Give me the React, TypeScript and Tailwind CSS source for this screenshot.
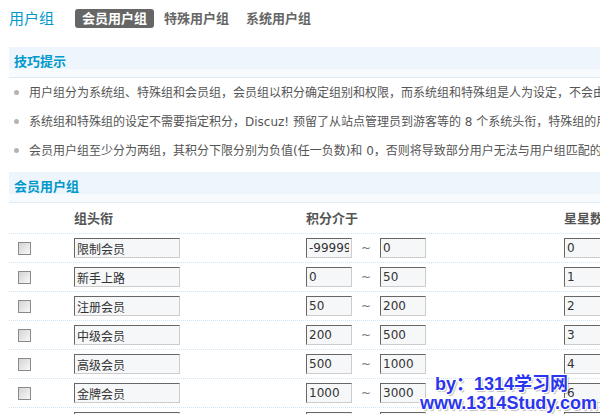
import type { ReactNode } from "react";

const tips: ReactNode[] = [
  "用户组分为系统组、特殊组和会员组，会员组以积分确定组别和权限，而系统组和特殊组是人为设定，不会由系统自动改变。",
  "系统组和特殊组的设定不需要指定积分，Discuz! 预留了从站点管理员到游客等的 8 个系统头衔，特殊组的用户需要在编辑会员时将其加入此组中。",
  "会员用户组至少分为两组，其积分下限分别为负值(任一负数)和 0，否则将导致部分用户无法与用户组匹配的情况。",
];

const groups = [
  { name: "限制会员", low: "-9999999", high: "0", stars: "0" },
  { name: "新手上路", low: "0", high: "50", stars: "1" },
  { name: "注册会员", low: "50", high: "200", stars: "2" },
  { name: "中级会员", low: "200", high: "500", stars: "3" },
  { name: "高级会员", low: "500", high: "1000", stars: "4" },
  { name: "金牌会员", low: "1000", high: "3000", stars: "6" },
  { name: "论坛元老", low: "3000", high: "9999999", stars: "8" },
];

function Field({ value, width }: { value: string; width: string }) {
  return (
    <input
      readOnly
      value={value}
      className={`${width} h-[20px] px-[2px] border border-t-[#666] border-l-[#666] border-b-[#ccc] border-r-[#ccc] bg-[#f6f7f9] text-[12px] text-[#333] outline-none font-['DejaVu_Sans','Noto_Sans_CJK_SC',sans-serif]`}
    />
  );
}

function Checkbox() {
  return (
    <span className="block w-[13px] h-[13px] border border-[#8a8a8a] bg-linear-to-br from-[#d4d4d4] to-[#f8f8f8]" />
  );
}

function Partition({ title }: { title: string }) {
  return (
    <div className="h-[31px] flex items-center pl-[5px] border-b border-dotted border-[#cfe3f3] bg-linear-to-b from-[#eef5fc] from-75% to-[#f7fbfe] to-75% text-[13px] font-bold text-[#0099cc]">
      {title}
    </div>
  );
}

export default function App() {
  return (
    <div className="relative w-[600px] h-[414px] overflow-hidden bg-white text-[#555] font-['DejaVu_Sans','Noto_Sans_CJK_SC',sans-serif]">
      <div className="w-[900px]">
        {/* Title and tabs */}
        <div className="h-[36px] flex items-center pl-[9px] font-['Noto_Sans_CJK_SC',sans-serif]">
          <h1 className="text-[15px] text-[#0099cc] mr-[21px]">用户组</h1>
          <div className="flex gap-[3px]">
            <span className="h-[19px] flex items-center px-[7px] rounded-[3px] bg-[#666] text-white text-[13px] font-bold">
              会员用户组
            </span>
            <span className="h-[19px] flex items-center px-[7px] text-[#666] text-[13px] font-bold">
              特殊用户组
            </span>
            <span className="h-[19px] flex items-center px-[7px] text-[#666] text-[13px] font-bold">
              系统用户组
            </span>
          </div>
        </div>

        {/* Tips */}
        <div className="ml-[9px] mt-[11px]">
          <Partition title="技巧提示" />
          <ul>
            {tips.map((tip, i) => (
              <li key={i} className="h-[29px] flex items-center text-[12px] whitespace-nowrap">
                <span className="w-[5px] h-[5px] rounded-full bg-[#b4b4b4] ml-[5px] mr-[10px] shrink-0" />
                {tip}
              </li>
            ))}
          </ul>
        </div>

        {/* Member groups */}
        <div className="ml-[9px] mt-[7px]">
          <Partition title="会员用户组" />
          <div className="grid grid-cols-[65px_232px_258px_1fr] h-[30px] items-center text-[13px] font-bold text-[#555] font-['Noto_Sans_CJK_SC',sans-serif]">
            <span />
            <span>组头衔</span>
            <span>积分介于</span>
            <span>星星数</span>
          </div>
          {groups.map((g) => (
            <div
              key={g.name}
              className="grid grid-cols-[65px_232px_258px_1fr] h-[29px] items-center border-t border-dotted border-[#cfe3f3]"
            >
              <div className="pl-[9px]">
                <Checkbox />
              </div>
              <Field value={g.name} width="w-[106px]" />
              <div className="flex items-center">
                <Field value={g.low} width="w-[46px]" />
                <span className="w-[28px] text-center text-[12px] text-[#777]">~</span>
                <Field value={g.high} width="w-[46px]" />
              </div>
              <Field value={g.stars} width="w-[46px]" />
            </div>
          ))}
        </div>
      </div>

      {/* Watermark */}
      <div className="absolute left-[420px] top-[375px] text-[18px] leading-[19px] font-bold text-[#2b35ee] whitespace-nowrap font-['Liberation_Sans','Noto_Sans_CJK_SC',sans-serif] [text-shadow:1px_1px_0_#fff,-1px_-1px_0_#fff,1px_-1px_0_#fff,-1px_1px_0_#fff,2px_2px_1px_rgba(0,0,0,0.25)]">
        <div className="h-[19px] pl-[15px]">by：1314学习网</div>
        <div className="h-[19px]">www.1314Study.com</div>
      </div>
    </div>
  );
}
